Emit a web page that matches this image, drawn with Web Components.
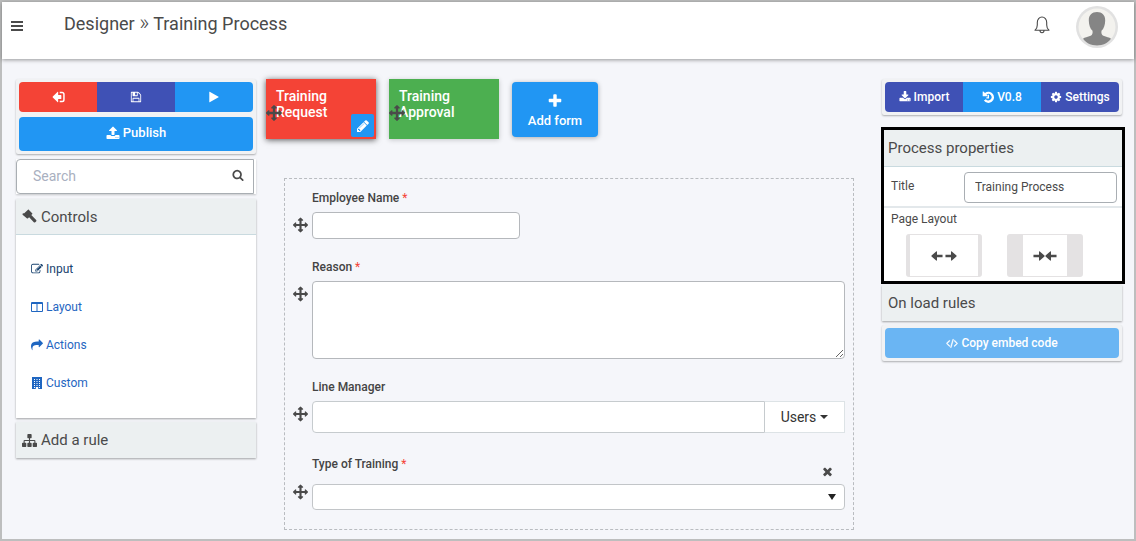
<!DOCTYPE html>
<html lang="en">
<head>
<meta charset="utf-8">
<title>Designer » Training Process</title>
<style>
  html { background: #f5f6fa; }
  body { margin: 0; font-family: Roboto, "Liberation Sans", sans-serif; font-size: 14px; color: #4a4a4a; }
</style>
</head>
<body>
<designer-app></designer-app>

<script>
const ICONS = {
  bars: ['0 0 14 14', '<path d="M1 2h12v2H1zM1 6h12v2H1zM1 10h12v2H1z"/>'],
  exit: ['0 0 16 14', '<path d="M7.600 1v3.500h3.200c.4 0 .7.3.7.7v3.600c0 .4-.3.700-.7.700H7.600V13c0 .5-.5.700-.9.300L1 7.500a.7.7 0 0 1 0-1L6.700.700c.4-.4.900-.2.900.3z"/><path d="M9.500 1.500h3A2.200 2.200 0 0 1 14.700 3.700v6.600a2.200 2.200 0 0 1-2.200 2.200h-3" fill="none" stroke="currentColor" stroke-width="1.800"/>'],
  save: ['0 0 1792 1792', '<path d="M512 1536h768v-384h-768v384zm896 0h128v-896q0-14-10-38.500t-20-34.500l-281-281q-10-10-34-20t-39-10v416q0 40-28 68t-68 28h-576q-40 0-68-28t-28-68v-416h-128v1280h128v-416q0-40 28-68t68-28h832q40 0 68 28t28 68v416zm-384-928v-320q0-13-9.500-22.500t-22.500-9.500h-192q-13 0-22.500 9.500t-9.500 22.500v320q0 13 9.500 22.500t22.500 9.500h192q13 0 22.500-9.500t9.500-22.500zm640 32v928q0 40-28 68t-68 28h-1344q-40 0-68-28t-28-68v-1344q0-40 28-68t68-28h928q40 0 88 20t76 48l280 280q28 28 48 76t20 88z"/>'],
  play: ['0 0 1792 1792', '<path d="M1576 927l-1328 738q-23 13-39.500 3t-16.500-36v-1472q0-26 16.500-36t39.500 3l1328 738q23 13 23 31t-23 31z"/>'],
  upload: ['0 0 1792 1792', '<path d="M1344 1472q0-26-19-45t-45-19-45 19-19 45 19 45 45 19 45-19 19-45zm256 0q0-26-19-45t-45-19-45 19-19 45 19 45 45 19 45-19 19-45zm128-224v320q0 40-28 68t-68 28h-1472q-40 0-68-28t-28-68v-320q0-40 28-68t68-28h427q21 56 70.500 92t110.500 36h256q61 0 110.500-36t70.500-92h427q40 0 68 28t28 68zm-325-648q-17 40-59 40h-256v448q0 26-19 45t-45 19h-256q-26 0-45-19t-19-45v-448h-256q-42 0-59-40-17-39 14-69l448-448q18-19 45-19t45 19l448 448q31 30 14 69z"/>'],
  download: ['0 0 1792 1792', '<path d="M1344 1344q0-26-19-45t-45-19-45 19-19 45 19 45 45 19 45-19 19-45zm256 0q0-26-19-45t-45-19-45 19-19 45 19 45 45 19 45-19 19-45zm128-224v320q0 40-28 68t-68 28h-1472q-40 0-68-28t-28-68v-320q0-40 28-68t68-28h465l135 136q58 56 136 56t136-56l136-136h464q40 0 68 28t28 68zm-325-569q17 41-14 70l-448 448q-18 19-45 19t-45-19l-448-448q-31-29-14-70 17-39 59-39h256v-448q0-26 19-45t45-19h256q26 0 45 19t19 45v448h256q42 0 59 39z"/>'],
  search: ['0 0 1792 1792', '<path d="M1216 832q0-185-131.500-316.500t-316.500-131.500-316.500 131.500-131.500 316.500 131.500 316.500 316.500 131.500 316.500-131.500 131.500-316.500zm512 832q0 52-38 90t-90 38q-54 0-90-38l-343-342q-179 124-399 124-143 0-273.500-55.500t-225-150-150-225-55.500-273.500 55.500-273.500 150-225 225-150 273.500-55.500 273.500 55.500 225 150 150 225 55.500 273.500q0 220-124 399l343 343q37 37 37 90z"/>'],
  gavel: ['0 0 16 16', '<path d="M7.200.8l3.600 3.600c.4.400.4.900 0 1.300L9.900 6.300l5.200 5.300c1.100 1.300-1.200 3.700-2.500 2.500L7.600 8.700l-1.200 1.100c-.4.400-.9.400-1.300 0L.9 6.300c-.5-.5-.4-1.200 0-1.500.4-.3.8-.4 1.200 0L6.400.8c.2-.2.600-.2.800 0z"/>'],
  edit: ['0 0 1792 1792', '<path d="M888 1184l116-116-152-152-116 116v56h96v96h56zm440-720q-16-16-33 1l-350 350q-17 17-1 33t33-1l350-350q17-17 1-33zm80 594v190q0 119-84.500 203.500t-203.500 84.500h-832q-119 0-203.500-84.500t-84.500-203.500v-832q0-119 84.500-203.500t203.500-84.500h832q63 0 117 25 15 7 18 23 3 17-9 29l-49 49q-14 14-32 8-23-6-45-6h-832q-66 0-113 47t-47 113v832q0 66 47 113t113 47h832q66 0 113-47t47-113v-126q0-13 9-22l64-64q15-15 35-7t20 29zm-96-738l288 288-672 672h-288v-288zm444 132l-92 92-288-288 92-92q28-28 68-28t68 28l152 152q28 28 28 68t-28 68z"/>'],
  columns: ['0 0 12 12', '<path fill-rule="evenodd" d="M1 1h10a1 1 0 0 1 1 1v8a1 1 0 0 1-1 1H1a1 1 0 0 1-1-1V2a1 1 0 0 1 1-1zm0 2v7h4.500V3zm5.500 0v7H11V3z"/>'],
  share: ['0 0 1792 1792', '<path d="M1792 640q0 26-19 45l-512 512q-19 19-45 19t-45-19-19-45v-256h-224q-98 0-175.500 6t-154 21.500-133 42.500-105.500 69.500-80 101-48.500 138.500-17.500 181q0 55 5 123 0 6 2.500 23.500t2.500 26.500q0 15-8.500 25t-23.500 10q-16 0-28-17-7-9-13-22t-13.500-30-10.500-24q-127-285-127-451 0-199 53-333 162-403 875-403h224v-256q0-26 19-45t45-19 45 19l512 512q19 19 19 45z"/>'],
  building: ['0 0 12 12', '<path fill-rule="evenodd" d="M1 0h10v12H7.200v-2H4.800v2H1zM3 2v1h1V2zm2.500 0v1h1V2zM8 2v1h1V2zM3 4v1h1V4zm2.500 0v1h1V4zM8 4v1h1V4zM3 6v1h1V6zm2.500 0v1h1V6zM8 6v1h1V6zM3 8v1h1V8zm2.500 0v1h1V8zM8 8v1h1V8zM3 10v1h1v-1zm5 0v1h1v-1z"/>'],
  sitemap: ['0 0 1792 1792', '<path d="M1792 1248v320q0 40-28 68t-68 28h-320q-40 0-68-28t-28-68v-320q0-40 28-68t68-28h96v-192h-512v192h96q40 0 68 28t28 68v320q0 40-28 68t-68 28h-320q-40 0-68-28t-28-68v-320q0-40 28-68t68-28h96v-192h-512v192h96q40 0 68 28t28 68v320q0 40-28 68t-68 28h-320q-40 0-68-28t-28-68v-320q0-40 28-68t68-28h96v-192q0-52 38-90t90-38h512v-192h-96q-40 0-68-28t-28-68v-320q0-40 28-68t68-28h320q40 0 68 28t28 68v320q0 40-28 68t-68 28h-96v192h512q52 0 90 38t38 90v192h96q40 0 68 28t28 68z"/>'],
  move: ['0 0 1792 1792', '<path d="M1792 896q0 26-19 45l-256 256q-19 19-45 19t-45-19-19-45v-128h-384v384h128q26 0 45 19t19 45-19 45l-256 256q-19 19-45 19t-45-19l-256-256q-19-19-19-45t19-45 45-19h128v-384h-384v128q0 26-19 45t-45 19-45-19l-256-256q-19-19-19-45t19-45l256-256q19-19 45-19t45 19 19 45v128h384v-384h-128q-26 0-45-19t-19-45 19-45l256-256q19-19 45-19t45 19l256 256q19 19 19 45t-19 45-45 19h-128v384h384v-128q0-26 19-45t45-19 45 19l256 256q19 19 19 45z"/>'],
  pencil: ['0 0 1792 1792', '<path d="M491 1536l91-91-235-235-91 91v107h128v128h107zm523-928q0-22-22-22-10 0-17 7l-542 542q-7 7-7 17 0 22 22 22 10 0 17-7l542-542q7-7 7-17zm-54-192l416 416-832 832h-416v-416zm683 96q0 53-37 90l-166 166-416-416 166-165q36-38 90-38 53 0 91 38l235 234q37 39 37 91z"/>'],
  plus: ['0 0 1792 1792', '<path d="M1600 736v192q0 40-28 68t-68 28h-416v416q0 40-28 68t-68 28h-192q-40 0-68-28t-28-68v-416h-416q-40 0-68-28t-28-68v-192q0-40 28-68t68-28h416v-416q0-40 28-68t68-28h192q40 0 68 28t28 68v416h416q40 0 68 28t28 68z"/>'],
  times: ['0 0 1792 1792', '<path d="M1490 1322q0 40-28 68l-136 136q-28 28-68 28t-68-28l-294-294-294 294q-28 28-68 28t-68-28l-136-136q-28-28-28-68t28-68l294-294-294-294q-28-28-28-68t28-68l136-136q28-28 68-28t68 28l294 294 294-294q28-28 68-28t68 28l136 136q28 28 28 68t-28 68l-294 294 294 294q28 28 28 68z"/>'],
  undo: ['0 0 14 14', '<path d="M.8 1v4.700c0 .3.2.500.500.500H6c.5 0 .7-.5.300-.9L5.300 4.200a3.700 3.700 0 1 1-.8 5.300l-2.300 1.700A6.500 6.500 0 1 0 3.500 2.300L1.700.700C1.300.3.800.5.800 1z"/><path d="M6.600 4.500h1.600v4.300H5.100V7.300h1.500z"/>'],
  cog: ['0 0 1792 1792', '<path d="M1152 896q0-106-75-181t-181-75-181 75-75 181 75 181 181 75 181-75 75-181zm512-109v222q0 12-8 23t-20 13l-185 28q-19 54-39 91 35 50 107 138 10 12 10 25t-9 23q-27 37-99 108t-94 71q-12 0-26-9l-138-108q-44 23-91 38-16 136-29 186-7 28-36 28h-222q-14 0-24.500-8.500t-11.500-21.500l-28-184q-49-16-90-37l-141 107q-10 9-25 9-14 0-25-11-126-114-165-168-7-10-7-23 0-12 8-23 15-21 51-66.500t54-70.500q-27-50-41-99l-183-27q-13-2-21-12.500t-8-23.500v-222q0-12 8-23t19-13l186-28q14-46 39-92-40-57-107-138-10-12-10-24 0-10 9-23 26-36 98.500-107.500t94.500-71.500q13 0 26 10l138 107q44-23 91-38 16-136 29-186 7-28 36-28h222q14 0 24.500 8.500t11.500 21.500l28 184q49 16 90 37l142-107q9-9 24-9 13 0 25 10 129 119 165 170 7 8 7 22 0 12-8 23-15 21-51 66.500t-54 70.500q26 50 41 98l183 28q13 2 21 12.500t8 23.500z"/>'],
  code: ['0 0 1920 1792', '<path stroke="currentColor" stroke-width="70" d="M617 1399l-50 50q-10 10-23 10t-23-10l-466-466q-10-10-10-23t10-23l466-466q10-10 23-10t23 10l50 50q10 10 10 23t-10 23l-393 393 393 393q10 10 10 23t-10 23zm591-1067l-373 1291q-4 13-15.500 19.500t-23.500 2.500l-62-17q-13-4-19.500-15.500t-2.500-24.500l373-1291q4-13 15.500-19.500t23.500-2.500l62 17q13 4 19.500 15.500t2.500 24.500zm657 651l-466 466q-10 10-23 10t-23-10l-50-50q-10-10-10-23t10-23l393-393-393-393q-10-10-10-23t10-23l50-50q10-10 23-10t23 10l466 466q10 10 10 23t-10 23z"/>'],
  right: ['0 0 13 12', '<path d="M.5 4.600h6V1.500c0-.5.5-.7.900-.4l5 4.400c.3.300.3.700 0 1l-5 4.400c-.4.300-.9.100-.9-.4V7.400h-6z"/>'],
  left: ['0 0 13 12', '<path d="M12.500 4.600h-6V1.500c0-.5-.5-.7-.9-.4l-5 4.400c-.3.300-.3.700 0 1l5 4.400c.4.300.9.100.9-.4V7.400h6z"/>'],
  caret: ['0 0 8 4', '<path d="M0 0h8L4 4z"/>'],
  triangle: ['0 0 8 6', '<path d="M0 0h8L4 6z"/>'],
  bell: ['0 0 16 18', '<path d="M1 14.200c1.700-1.300 2.300-2.800 2.300-5.200V6.500C3.300 3.500 5.300 1 8 1s4.700 2.500 4.700 5.500V9c0 2.400.6 3.900 2.300 5.200zM6 14.500c0 1.300.9 2.200 2 2.200s2-.9 2-2.200" fill="none" stroke="currentColor" stroke-width="1.100" stroke-linejoin="round"/>'],
  person: ['0 0 42 42', '<circle cx="21" cy="21" r="21" fill="#e1e1e1"/><circle cx="21" cy="21" r="18.500" fill="#f3f2ee"/><path fill="#858585" d="M21 6c5 0 8.300 3 8.200 8.500-.1 4.300-1.300 8.200-3.700 10.300-.4 2.200.1 4.200 1.800 4.900 3 1.200 6.200 1.500 7.700 3.100C32 37 27 39.500 21 39.500S10 37 7 32.800c1.500-1.600 4.700-1.900 7.700-3.100 1.700-.7 2.200-2.700 1.800-4.900-2.400-2.100-3.600-6-3.700-10.300C12.700 9 16 6 21 6z"/>']
};

class Base extends HTMLElement {
  constructor() { super(); this.attachShadow({ mode: 'open' }); }
  connectedCallback() {
    this.shadowRoot.innerHTML = '<style>*{box-sizing:border-box}button,input,textarea,select{font:inherit;color:inherit;margin:0}:host{display:block;box-sizing:border-box}' + this.css() + '</style>' + this.html();
  }
}

customElements.define('ui-icon', class extends Base {
  css() { return ':host{display:inline-block;flex:none;width:14px;height:14px}svg{display:block;width:100%;height:100%;fill:currentColor}'; }
  html() { const [box, art] = ICONS[this.getAttribute('name')]; return `<svg viewBox="${box}" aria-hidden="true">${art}</svg>`; }
});

customElements.define('ui-button', class extends Base {
  css() { return `
    :host{flex:1 1 0;min-width:0;height:30px;--bg:#2196f3}
    :host([tone=red]){--bg:#f44336}
    :host([tone=indigo]){--bg:#3f51b5}
    :host([tone=pale]){--bg:#6ab5f3}
    :host([size=large]){height:34px}
    button{display:flex;align-items:center;justify-content:center;gap:3px;width:100%;height:100%;padding:0;border:0;border-radius:inherit;background:var(--bg);color:#fff;font-size:12px;font-weight:500;white-space:nowrap}
    :host([size=large]) button{font-size:13px;line-height:16px;padding-bottom:2px}`; }
  html() { return `<button type="button" aria-label="${this.getAttribute('label') || ''}"><slot></slot></button>`.replace(' aria-label=""', ''); }
});

customElements.define('button-card', class extends Base {
  css() { return `
    :host{padding:3px;background:#f1f2f4;border-radius:2px;box-shadow:0 1px 2px rgba(0,0,0,.3);display:flex;flex-direction:column;gap:5px}
    ::slotted(div){display:flex;border-radius:4px;overflow:hidden}
    ::slotted(ui-button){border-radius:4px;flex:none}`; }
  html() { return '<slot></slot>'; }
});

customElements.define('side-panel', class extends Base {
  css() { return `
    :host{background:#fff;box-shadow:0 1px 2px rgba(0,0,0,.35)}
    h2{margin:0;display:flex;align-items:center;gap:4px;height:36px;padding:0 6px;background:#ecf0f1;font-size:15px;font-weight:400;line-height:20px}
    :host([open]) h2{border-bottom:1px solid #c9dadf}
    :host([highlight]){outline:3px solid #000;box-shadow:none}
    :host([highlight]) h2{height:37px;padding:0 4px}`; }
  html() { return '<h2><slot name="title"></slot></h2><slot></slot>'; }
});

customElements.define('search-box', class extends Base {
  css() { return `
    :host{position:relative;padding-right:2px;background:#fff;box-shadow:0 1px 2px rgba(0,0,0,.2)}
    input{display:block;width:100%;height:35px;padding:0 32px 2px 16px;border:1px solid #a9aeb3;border-radius:4px 0 0 4px;background:#fff;font-size:14px;outline:0}
    input::placeholder{color:#a9b0c0}
    ui-icon{position:absolute;right:12px;top:10px;width:12px;height:12px}`; }
  html() { return '<input type="search" placeholder="Search" aria-label="Search"><ui-icon name="search"></ui-icon>'; }
});

customElements.define('control-list', class extends Base {
  css() { return `
    :host{padding:15px 15px 16px}
    a{display:flex;align-items:center;gap:3px;height:38px;color:#1f66c1;font-size:12px;text-decoration:none}
    a.current{color:#1b4470}
    ui-icon{width:12px;height:12px}`; }
  html() {
    return '<nav>' + [['edit', 'Input'], ['columns', 'Layout'], ['share', 'Actions'], ['building', 'Custom']]
      .map(([i, t], n) => `<a href="#${t.toLowerCase()}"${n ? '' : ' class="current"'}><ui-icon name="${i}"></ui-icon>${t}</a>`).join('') + '</nav>';
  }
});

customElements.define('form-tab', class extends Base {
  css() { return `
    :host{position:relative;width:110px;height:60px;background:#4caf50;box-shadow:0 1px 5px rgba(0,0,0,.2)}
    :host([active]){background:#f44336;box-shadow:0 1px 6px rgba(0,0,0,.65)}
    a{display:block;height:100%;padding:9px 20px 0 10px;color:#fff;font-size:14px;font-weight:500;line-height:16px;text-decoration:none}
    .grip{position:absolute;left:0;top:26px;width:16px;height:16px;color:#4a4a4a}
    button{display:none}
    :host([active]) button{position:absolute;right:2px;bottom:2px;display:grid;place-items:center;width:23px;height:23px;padding:0;border:0;border-radius:2px;background:#2196f3;color:#fff}`; }
  html() { return '<a href="#form"><slot></slot></a><ui-icon class="grip" name="move"></ui-icon><button type="button" aria-label="Edit form"><ui-icon name="pencil"></ui-icon></button>'; }
});

customElements.define('form-tabs', class extends Base {
  css() { return `
    :host{display:flex;gap:13px;align-items:flex-start;padding-left:10px}
    button{display:flex;flex-direction:column;align-items:center;gap:4px;width:86px;height:55px;margin-top:3px;padding:11px 0 0;border:0;border-radius:4px;background:#2196f3;color:#fff;font-size:13px;font-weight:500;line-height:16px;box-shadow:0 1px 5px rgba(0,0,0,.3)}
    button ui-icon{width:16px;height:16px}`; }
  html() { return '<form-tab active>Training Request</form-tab><form-tab>Training Approval</form-tab><button type="button"><ui-icon name="plus"></ui-icon>Add form</button>'; }
});

customElements.define('form-field', class extends Base {
  css() { return `
    :host{display:grid;grid-template-columns:15px minmax(0,1fr);column-gap:4px;row-gap:6px}
    .head{grid-column:2;display:flex;justify-content:space-between}
    label{font-size:12px;font-weight:500;line-height:16px;color:#444}
    label span{color:#f44336;font-weight:400}
    .grip{width:15px;height:16px;margin-top:5px}
    input,textarea,select{display:block;width:100%;height:27px;padding:0 8px;border:1px solid #b5b8bc;border-radius:4px;background:#fff;outline:0}
    input.short{width:208px}
    textarea{height:78px;padding:8px;resize:vertical}
    .group{display:flex}
    .group input{height:32px;border-color:#c6cbce;border-radius:4px 0 0 4px}
    .group button{display:flex;align-items:center;justify-content:center;gap:4px;flex:none;width:80px;padding:0;border:1px solid #dde3e6;border-left:0;background:#fff;color:#333;font-size:14px}
    .group ui-icon{width:8px;height:4px}
    :host([kind=select]){row-gap:0}
    :host([kind=select]) .head{height:31px}
    :host([kind=select]) label{line-height:22px}
    :host([kind=select]) .grip{margin-top:0}
    .clear{align-self:flex-end;display:grid;place-items:center;width:16px;height:26px;margin-right:10px;padding:0;border:0;background:none}
    .clear ui-icon{width:13px;height:13px}
    .pick{position:relative}
    select{appearance:none;height:26px;border-color:#c2c5c8}
    .pick ui-icon{position:absolute;right:9px;top:10px;width:8px;height:6px;color:#222}`; }
  html() {
    const kind = this.getAttribute('kind');
    const control = {
      text: '<input id="c" class="short" type="text">',
      area: '<textarea id="c"></textarea>',
      lookup: '<div class="group"><input id="c" type="text"><button type="button">Users<ui-icon name="caret"></ui-icon></button></div>',
      select: '<div class="pick"><select id="c"><option></option></select><ui-icon name="triangle"></ui-icon></div>'
    }[kind];
    const clear = kind === 'select' ? '<button class="clear" type="button" aria-label="Clear"><ui-icon name="times"></ui-icon></button>' : '';
    const star = this.hasAttribute('required') ? ' <span>*</span>' : '';
    return `<div class="head"><label for="c">${this.getAttribute('label')}${star}</label>${clear}</div><ui-icon class="grip" name="move"></ui-icon>${control}`;
  }
});

customElements.define('form-canvas', class extends Base {
  css() { return `
    :host{padding:11px 8px 19px;border:1px dashed #b9bcc0;display:flex;flex-direction:column;gap:20px}`; }
  html() { return `
    <form-field kind="text" label="Employee Name" required></form-field>
    <form-field kind="area" label="Reason" required></form-field>
    <form-field kind="lookup" label="Line Manager"></form-field>
    <form-field kind="select" label="Type of Training" required></form-field>`; }
});

customElements.define('process-properties', class extends Base {
  css() { return `
    :host{font-size:12px}
    .title{display:flex;align-items:flex-start;justify-content:space-between;padding:5px 5px 3px 7px;border-bottom:2px solid #e3e8eb}
    .title label{line-height:28px}
    input{width:153px;height:31px;padding:0 10px 2px;border:1px solid #a9aeb3;border-radius:4px;background:#fff;font-size:12px;outline:0}
    fieldset{margin:0;padding:0 7px 4px;border:0}
    legend{padding:0;line-height:22px}
    .options{display:flex;gap:25px;padding:4px 15px 0}
    button{display:flex;align-items:center;justify-content:center;gap:2px;width:76px;height:43px;padding:0;border:1px solid #e4e2e3;border-width:1px 4px;border-radius:3px;background:#fff}
    button.boxed{border-width:1px 16px;gap:0}
    ui-icon{width:12px;height:12px}`; }
  html() { return `
    <div class="title"><label for="t">Title</label><input id="t" type="text" value="Training Process"></div>
    <fieldset><legend>Page Layout</legend><div class="options">
      <button type="button" aria-label="Full width"><ui-icon name="left"></ui-icon><ui-icon name="right"></ui-icon></button>
      <button type="button" class="boxed" aria-label="Boxed"><ui-icon name="right"></ui-icon><ui-icon name="left"></ui-icon></button>
    </div></fieldset>`; }
});

customElements.define('app-header', class extends Base {
  css() { return `
    :host{display:flex;align-items:flex-start;height:57px;padding:0 16px 0 8px;background:#fff;box-shadow:0 1px 4px rgba(0,0,0,.4)}
    button{flex:none;display:grid;place-items:center;padding:0;border:0;background:none}
    .menu{width:14px;height:20px;margin:14px 40px 0 0}
    h1{flex:1;margin:10px 0 0;font-size:18px;font-weight:400;line-height:24px}
    h1 span{font-size:22px;font-weight:300;line-height:16px}
    .bell{width:16px;height:20px;margin:13px 26px 0 0}
    .bell ui-icon{width:16px;height:18px}
    .avatar{width:42px;height:42px;margin-top:4px}
    .avatar ui-icon{width:42px;height:42px}`; }
  html() { return '<button class="menu" type="button" aria-label="Menu"><ui-icon name="bars"></ui-icon></button><h1>Designer <span>»</span> Training Process</h1><button class="bell" type="button" aria-label="Notifications"><ui-icon name="bell"></ui-icon></button><button class="avatar" type="button" aria-label="Account"><ui-icon name="person"></ui-icon></button>'; }
});

customElements.define('designer-app', class extends Base {
  css() { return `
    :host{min-height:100vh;border:2px solid #bdbebe;background:#f5f6fa}
    main{display:grid;grid-template-columns:240px minmax(0,1fr) 240px;align-items:start;padding:20px 12px 8px 14px}
    aside{display:flex;flex-direction:column;gap:4px}
    .tools{gap:5px}
    .stack{display:flex;flex-direction:column;gap:4px}
    form-canvas{margin:39px 28px 0}
    .small{width:12px;height:12px}
    .exit{width:13px;height:12px}
    side-panel ui-icon{width:15px;height:15px}
    .props{margin:11px 0 0 2px}`; }
  html() { return `
    <app-header></app-header>
    <main>
      <aside class="tools">
        <button-card>
          <div><ui-button tone="red" label="Exit"><ui-icon name="exit" class="exit"></ui-icon></ui-button><ui-button tone="indigo" label="Save"><ui-icon name="save" class="small"></ui-icon></ui-button><ui-button label="Run"><ui-icon name="play" class="small"></ui-icon></ui-button></div>
          <ui-button size="large"><ui-icon name="upload"></ui-icon>Publish</ui-button>
        </button-card>
        <search-box></search-box>
        <div class="stack">
          <side-panel open><ui-icon slot="title" name="gavel"></ui-icon><span slot="title">Controls</span><control-list></control-list></side-panel>
          <side-panel><ui-icon slot="title" name="sitemap"></ui-icon><span slot="title">Add a rule</span></side-panel>
        </div>
      </aside>
      <section>
        <form-tabs></form-tabs>
        <form-canvas></form-canvas>
      </section>
      <aside>
        <button-card>
          <div><ui-button tone="indigo"><ui-icon name="download" class="small"></ui-icon>Import</ui-button><ui-button><ui-icon name="undo" class="small"></ui-icon>V0.8</ui-button><ui-button tone="indigo"><ui-icon name="cog" class="small"></ui-icon>Settings</ui-button></div>
        </button-card>
        <side-panel class="props" open highlight><span slot="title">Process properties</span><process-properties></process-properties></side-panel>
        <side-panel><span slot="title">On load rules</span></side-panel>
        <button-card><ui-button tone="pale"><ui-icon name="code" class="small"></ui-icon>Copy embed code</ui-button></button-card>
      </aside>
    </main>`; }
});
</script>
</body>
</html>
